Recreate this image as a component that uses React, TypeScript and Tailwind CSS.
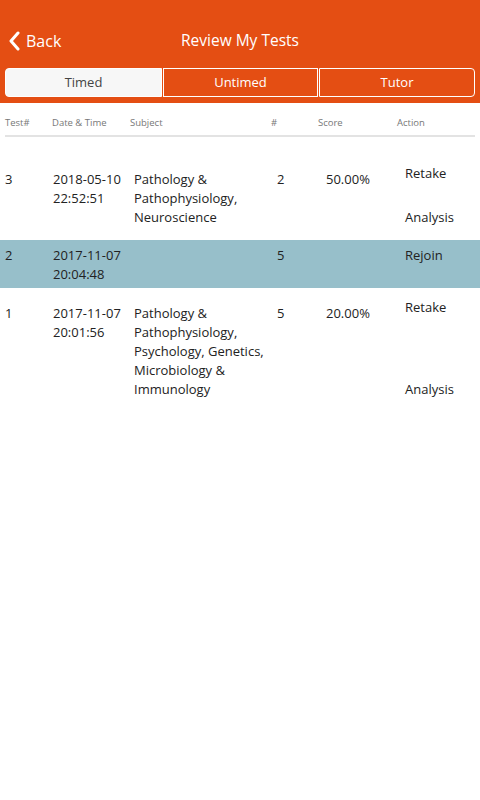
import React from 'react';

interface TestRow {
  id: string;
  date: string;
  time: string;
  subject: string[];
  count: number;
  score: string | null;
  highlighted?: boolean;
}

const rows: TestRow[] = [
  {
    id: '3',
    date: '2018-05-10',
    time: '22:52:51',
    subject: ['Pathology &', 'Pathophysiology,', 'Neuroscience'],
    count: 2,
    score: '50.00%',
  },
  {
    id: '2',
    date: '2017-11-07',
    time: '20:04:48',
    subject: [],
    count: 5,
    score: null,
    highlighted: true,
  },
  {
    id: '1',
    date: '2017-11-07',
    time: '20:01:56',
    subject: ['Pathology &', 'Pathophysiology,', 'Psychology, Genetics,', 'Microbiology &', 'Immunology'],
    count: 5,
    score: '20.00%',
  },
];

export default function App() {
  return (
    <div
      className="min-h-[800px] w-[480px] bg-white text-[#222]"
      style={{ fontFamily: '"Open Sans", "Noto Sans", sans-serif' }}
    >
      {/* Header */}
      <div className="h-[103px] bg-[#e44e13] px-[5px] pt-[28px]">
        <div className="relative flex h-[26px] items-center justify-center">
          <div className="absolute left-[3px] top-0 flex h-[26px] items-center gap-[6px] text-white">
            <svg width="12" height="20" viewBox="0 0 12 20" fill="none">
              <polyline
                points="10,2 3,10 10,18"
                stroke="white"
                strokeWidth="3"
                strokeLinecap="round"
                strokeLinejoin="round"
              />
            </svg>
            <span className="text-[16px] leading-none">Back</span>
          </div>
          <span className="text-[15.5px] leading-none text-white">Review My Tests</span>
        </div>

        {/* Segmented control */}
        <div className="mt-[14px] flex h-[29px] gap-[1px]">
          <div className="flex w-[157px] items-center justify-center rounded-l-[4px] border border-white bg-[#f7f7f7] pt-[1px] text-[13px] text-[#444]">
            Timed
          </div>
          <div className="flex w-[155px] items-center justify-center border border-white pt-[1px] text-[13px] text-white">
            Untimed
          </div>
          <div className="flex flex-1 items-center justify-center rounded-r-[4px] border border-white pt-[1px] text-[13px] text-white">
            Tutor
          </div>
        </div>
      </div>

      {/* Table header */}
      <div className="mx-[5px] flex border-b-2 border-[#e3e3e3] pb-[6px] pt-[13px] text-[9.5px] leading-[13px] text-[#777]">
        <div className="w-[47px]">Test#</div>
        <div className="w-[78px]">Date &amp; Time</div>
        <div className="w-[141px]">Subject</div>
        <div className="w-[47px]">#</div>
        <div className="w-[79px]">Score</div>
        <div className="flex-1">Action</div>
      </div>

      {/* Rows */}
      <div className="mt-[17px]">
        {rows.map((r) =>
          r.highlighted ? (
            <div
              key={r.id}
              className="flex h-[48px] bg-[#97bfca] pl-[5px] pt-[6px] text-[13px] leading-[19px]"
            >
              <div className="w-[48px]">{r.id}</div>
              <div className="w-[81px]">
                <div>{r.date}</div>
                <div>{r.time}</div>
              </div>
              <div className="w-[143px]" />
              <div className="w-[49px]">{r.count}</div>
              <div className="w-[78px]" />
              <div className="flex-1 pl-[1px]">Rejoin</div>
            </div>
          ) : (
            <div
              key={r.id}
              className="flex pb-[13px] pl-[5px] pt-[10px] text-[13px] leading-[19px]"
            >
              <div className="w-[48px] pt-[6px]">{r.id}</div>
              <div className="w-[81px] pt-[6px]">
                <div>{r.date}</div>
                <div>{r.time}</div>
              </div>
              <div className="w-[143px] pt-[6px]">
                {r.subject.map((s) => (
                  <div key={s}>{s}</div>
                ))}
              </div>
              <div className="w-[49px] pt-[6px]">{r.count}</div>
              <div className="w-[78px] pt-[6px]">{r.score}</div>
              <div className="flex flex-1 flex-col justify-between pl-[1px]">
                <div>Retake</div>
                <div>Analysis</div>
              </div>
            </div>
          ),
        )}
      </div>
    </div>
  );
}
